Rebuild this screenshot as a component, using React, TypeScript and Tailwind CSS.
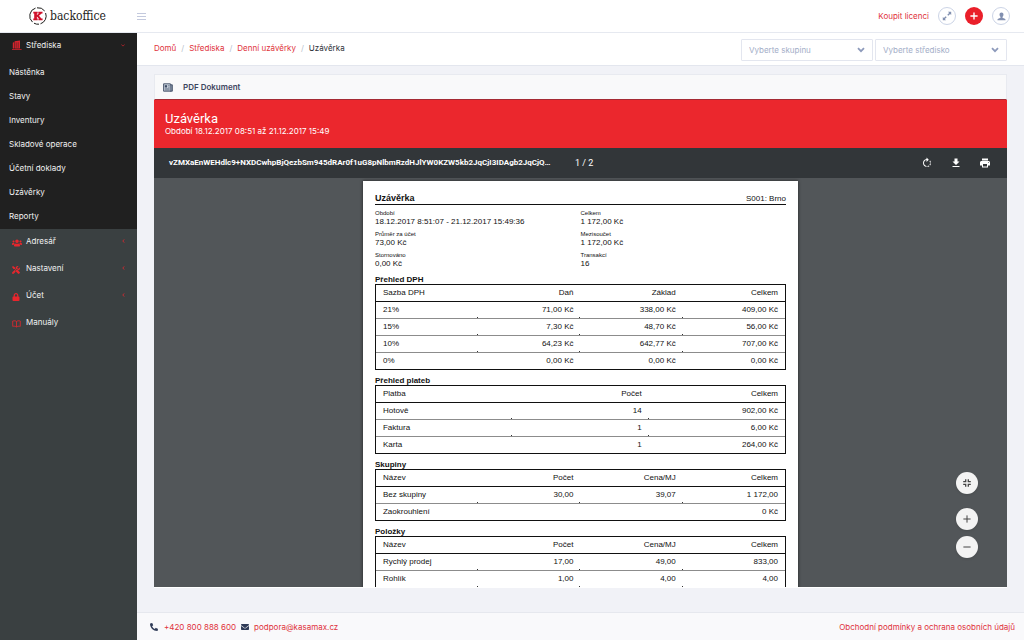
import React from 'react';
import { FaUsers, FaLock, FaTools, FaPhoneAlt, FaEnvelope } from 'react-icons/fa';
import { MdRotateRight, MdFileDownload, MdPrint } from 'react-icons/md';

interface SideItem {
  label: string;
  icon: React.ReactNode;
  arrow: boolean;
}

interface ReportTable {
  title: string;
  head: string[];
  rows: string[][];
}

const subItems = ['Nástěnka', 'Stavy', 'Inventury', 'Skladové operace', 'Účetní doklady', 'Uzávěrky', 'Reporty'];

const tables: ReportTable[] = [
  {
    title: 'Přehled DPH',
    head: ['Sazba DPH', 'Daň', 'Základ', 'Celkem'],
    rows: [
      ['21%', '71,00 Kč', '338,00 Kč', '409,00 Kč'],
      ['15%', '7,30 Kč', '48,70 Kč', '56,00 Kč'],
      ['10%', '64,23 Kč', '642,77 Kč', '707,00 Kč'],
      ['0%', '0,00 Kč', '0,00 Kč', '0,00 Kč'],
    ],
  },
  {
    title: 'Přehled plateb',
    head: ['Platba', 'Počet', 'Celkem'],
    rows: [
      ['Hotově', '14', '902,00 Kč'],
      ['Faktura', '1', '6,00 Kč'],
      ['Karta', '1', '264,00 Kč'],
    ],
  },
  {
    title: 'Skupiny',
    head: ['Název', 'Počet', 'Cena/MJ', 'Celkem'],
    rows: [
      ['Bez skupiny', '30,00', '39,07', '1 172,00'],
      ['Zaokrouhlení', '', '', '0 Kč'],
    ],
  },
  {
    title: 'Položky',
    head: ['Název', 'Počet', 'Cena/MJ', 'Celkem'],
    rows: [
      ['Rychlý prodej', '17,00', '49,00', '833,00'],
      ['Rohlík', '1,00', '4,00', '4,00'],
      ['', '', '', ''],
    ],
  },
];

const summary = [
  ['Období', '18.12.2017 8:51:07 - 21.12.2017 15:49:36'],
  ['Celkem', '1 172,00 Kč'],
  ['Průměr za účet', '73,00 Kč'],
  ['Mezisoučet', '1 172,00 Kč'],
  ['Stornováno', '0,00 Kč'],
  ['Transakcí', '16'],
];

const BuildingIcon = () => (
  <svg viewBox="0 0 10 10" className="h-[10px] w-[10px]" fill="currentColor">
    <path d="M2.6 1.2 8 .6v8H2.6z" />
    <path d="M.8 2.8 2.2 2v6.6H.8zM0 8.9h9.6v.8H0z" />
    <path d="M4.2 2.4v5.4M6.2 2.2v5.6" stroke="#202020" strokeWidth=".5" />
  </svg>
);

const BookIcon = () => (
  <svg viewBox="0 0 10 10" className="h-[9px] w-[9px]" fill="none" stroke="currentColor" strokeWidth=".9">
    <path d="M5 2.8C4 1.9 2.4 1.8.8 2.2v6c1.6-.4 3.2-.2 4.2.7 1-.9 2.6-1.1 4.2-.7v-6C7.6 1.8 6 1.9 5 2.8zM5 2.8v6" />
  </svg>
);

const NewsIcon = () => (
  <svg viewBox="0 0 10 9" className="h-[9px] w-[10px]" fill="none" stroke="#3d4b63">
    <path d="M.6.8h6.8v7.4H.6z" fill="#c9d2de" strokeWidth=".9" />
    <path d="M7.6 1.8h1.7v6.4H7" fill="#7d8a9e" strokeWidth=".9" />
    <path d="M5.2 2.6h1.3M5.2 4.2h1.3M1.8 5.8h4.7M1.8 7h4.7" strokeWidth=".6" />
    <path d="M1.8 2.2h2.3v2.3H1.8z" fill="#3d4b63" stroke="none" />
  </svg>
);

const Logo = () => (
  <svg viewBox="0 0 18 18" className="h-[18px] w-[18px]">
    <g fill="none" stroke="#1d1d1b" strokeWidth="1">
      <path d="M6.5 1.1A8.2 8.2 0 0 0 3.5 15.1" />
      <path d="M8 .8A8.2 8.2 0 0 1 15.7 4" />
      <path d="M16.6 6A8.2 8.2 0 0 1 11.5 16.8" />
      <path d="M10 17.2A8.2 8.2 0 0 1 5 16.2" />
    </g>
    <path
      fill="#d0112b"
      d="M4.3 4.8h4.4v1.7h-.8v1.6l2-1.6h-.6V4.8h4.2v1.7h-.9L10 8.700l2.4 2.900h1.200v1.700H9.400v-1.600h.6L7.900 9.400v2.200h.8v1.700H4.300v-1.700h.9V6.500h-.9z"
    />
  </svg>
);

const Chevron = () => (
  <svg viewBox="0 0 8 6" className="pointer-events-none absolute top-2 right-2 h-[6px] w-[8px]" fill="none" stroke="#8d9abb" strokeWidth="1.8">
    <path d="M1 1.2 4 4.2 7 1.2" />
  </svg>
);

const sideItems: SideItem[] = [
  { label: 'Adresář', icon: <FaUsers size={10} />, arrow: true },
  { label: 'Nastavení', icon: <FaTools size={8} />, arrow: true },
  { label: 'Účet', icon: <FaLock size={8} />, arrow: true },
  { label: 'Manuály', icon: <BookIcon />, arrow: false },
];

const Sidebar = () => (
  <nav className="w-[137px] shrink-0 bg-[#3a4041] text-[#f1f1f1]">
    <div className="bg-[#202020] pb-px">
      <a href="#strediska" className="flex h-6 items-center pr-3 pl-3">
        <span className="flex w-[14px] text-[#d9232e]">
          <BuildingIcon />
        </span>
        <span className="flex-1">Střediska</span>
        <svg viewBox="0 0 4 3" className="h-[3px] w-[4px]" fill="none" stroke="#c2232c" strokeWidth=".8">
          <path d="M.4.6 2 2.1 3.6.6" />
        </svg>
      </a>
      <ul className="pt-[3px]">
        {subItems.map((label) => (
          <li key={label}>
            <a href="#sub" className="flex h-6 items-center pl-[9px]">{label}</a>
          </li>
        ))}
      </ul>
    </div>
    <ul>
      {sideItems.map((item) => (
        <li key={item.label} className="pb-[3px]">
          <a href="#menu" className="flex h-6 items-center pr-3 pl-3">
            <span className="flex w-[14px] pt-[3px] text-[#e8262d]">{item.icon}</span>
            <span className="flex-1">{item.label}</span>
            {item.arrow && (
              <svg viewBox="0 0 3 4" className="h-[4px] w-[3px]" fill="none" stroke="#e8262d" strokeWidth=".8">
                <path d="M2.2.4.8 2l1.4 1.6" />
              </svg>
            )}
          </a>
        </li>
      ))}
    </ul>
  </nav>
);

const Filter = ({ id, label }: { id: string; label: string }) => (
  <div className="relative w-[132px]">
    <select id={id} aria-label={label} className="block h-[22px] w-full appearance-none rounded-[1px] border border-[#e3e6ef] bg-white px-[7px] text-[#a3aec8]">
      <option>{label}</option>
    </select>
    <Chevron />
  </div>
);

const ReportSection = ({ table }: { table: ReportTable }) => (
  <section>
    <h3 className="flex h-[15px] items-end leading-[8px] font-bold">{table.title}</h3>
    <table className="w-full table-fixed border-separate border-spacing-0 border border-[#111]">
      <thead>
        <tr>
          {table.head.map((cell) => (
            <th key={cell} className="h-[17px] border-b border-[#111] px-[7px] text-right leading-[8px] font-normal first:text-left">
              {cell}
            </th>
          ))}
        </tr>
      </thead>
      <tbody className="[&>tr:last-child>td]:h-4 [&>tr:last-child>td]:border-b-0 [&>tr:last-child>td]:after:hidden">
        {table.rows.map((row, r) => (
          <tr key={r}>
            {row.map((cell, c) => (
              <td
                key={c}
                className="relative h-[17px] border-b border-[#8c8c8c] px-[7px] text-right leading-[8px] first:text-left after:absolute after:right-0 after:bottom-0 after:h-px after:w-px after:bg-[#333] last:after:hidden"
              >
                {cell}
              </td>
            ))}
          </tr>
        ))}
      </tbody>
    </table>
  </section>
);

const PdfPage = () => (
  <div className="mx-auto mt-[3px] w-[51%] bg-white px-3 pt-3 pb-6 font-['Liberation_Sans',sans-serif] text-[8px] text-[#111] shadow-[0_0_3px_#222]">
    <div className="flex items-end justify-between border-b border-[#111] leading-[11px]">
      <h2 className="text-[9px] font-bold">Uzávěrka</h2>
      <span>S001: Brno</span>
    </div>
    <dl className="mt-[4px] mb-px grid grid-cols-2 gap-y-[4px]">
      {summary.map(([label, value]) => (
        <div key={label}>
          <dt className="text-[6px] leading-[8px]">{label}</dt>
          <dd className="leading-[9px]">{value}</dd>
        </div>
      ))}
    </dl>
    {tables.map((table) => (
      <ReportSection key={table.title} table={table} />
    ))}
  </div>
);

const zoomButton = 'flex h-[22px] w-[22px] items-center justify-center rounded-full bg-[#f3f3f3] text-[#444] shadow-sm';

const PdfViewer = () => (
  <div className="relative flex min-h-0 flex-1 flex-col border-b border-white bg-[#525659]">
    <div className="flex h-[30px] shrink-0 items-center bg-[#323639] pr-4 pl-[15px] font-[Roboto,sans-serif] text-[9px] text-white">
      <span className="min-w-[402px] text-[8px] font-bold">vZMXaEnWEHdlc9+NXDCwhpBjQezbSm945dRAr0f1uG8pNlbmRzdHJlYW0KZW5kb2JqCjI3IDAgb2JqCjQ…</span>
      <span className="ml-1 flex-1 whitespace-pre">1 / 2</span>
      <div className="flex gap-[17px]">
        <button aria-label="Otočit"><MdRotateRight size={12} /></button>
        <button aria-label="Stáhnout"><MdFileDownload size={12} /></button>
        <button aria-label="Tisk"><MdPrint size={12} /></button>
      </div>
    </div>
    <div className="min-h-0 flex-1 overflow-hidden">
      <PdfPage />
    </div>
    <div className="absolute right-[29px] bottom-[29px] flex flex-col gap-[6px]">
      <button aria-label="Přizpůsobit" className={`${zoomButton} mb-[8px]`}>
        <svg viewBox="0 0 8 8" className="h-[8px] w-[8px]" fill="none" stroke="currentColor" strokeWidth="1.3">
          <path d="M2.7.2v2.5H.2M5.300.2v2.500h2.500M2.700 7.800V5.300H.2M5.300 7.800V5.300h2.500" />
        </svg>
      </button>
      <button aria-label="Přiblížit" className={zoomButton}>
        <svg viewBox="0 0 8 8" className="h-[8px] w-[8px]" stroke="currentColor"><path d="M4 .4v7.2M.4 4h7.2" /></svg>
      </button>
      <button aria-label="Oddálit" className={zoomButton}>
        <svg viewBox="0 0 8 8" className="h-[8px] w-[8px]" stroke="currentColor"><path d="M.4 4h7.2" /></svg>
      </button>
    </div>
  </div>
);

const Topbar = () => (
  <header className="flex h-[33px] shrink-0 items-center border-b border-[#e6e9f0] bg-white pr-[14px] pl-[29px]">
    <a href="#home" className="flex items-center gap-[3px]">
      <Logo />
      <span className="font-['DejaVu_Serif_Condensed','DejaVu_Serif',serif] text-[12px] text-[#1d1d1b]">backoffice</span>
    </a>
    <button aria-label="Menu" className="ml-[31px]">
      <svg viewBox="0 0 9 7" className="h-[7px] w-[9px]" stroke="#c3c9dd" strokeWidth="1">
        <path d="M0 .5h9M0 3.5h9M0 6.5h9" />
      </svg>
    </button>
    <div className="ml-auto flex items-center gap-[9px]">
      <a href="#licence" className="text-[#e0323b]">Koupit licenci</a>
      <button aria-label="Celá obrazovka" className="flex h-[18px] w-[18px] items-center justify-center rounded-full border border-[#ccd4e6] text-[#8290b0]">
        <svg viewBox="0 0 10 10" className="h-[10px] w-[10px]" fill="currentColor">
          <path d="M6 .8h3.2V4L8.100 2.900 6.300 4.700l-1-1 1.800-1.800zM4 9.200H.8V6l1.100 1.100 1.800-1.800 1 1-1.800 1.800z" />
        </svg>
      </button>
      <button aria-label="Přidat" className="flex h-[18px] w-[18px] items-center justify-center rounded-full bg-[#ea1f2a]">
        <svg viewBox="0 0 8 8" className="h-[8px] w-[8px]" stroke="#fff" strokeWidth="1.4"><path d="M4 .4v7.2M.4 4h7.2" /></svg>
      </button>
      <button aria-label="Profil" className="flex h-[18px] w-[18px] items-center justify-center rounded-full border border-[#ccd4e6] text-[#8290b0]">
        <svg viewBox="0 0 10 10" className="h-[9px] w-[9px]" fill="currentColor">
          <path d="M5 .6c1.4 0 2.2 1 2.2 2.3S6.600 5 6.100 5.600v.8l2.600 1c.5.2.8.6.8 1.800h-9c0-1.200.3-1.600.8-1.800l2.600-1v-.8C3.400 5 2.800 4.200 2.800 2.900S3.600.6 5 .6z" />
        </svg>
      </button>
    </div>
  </header>
);

const crumbs = ['Domů', 'Střediska', 'Denní uzávěrky'];

const App: React.FC = () => {
  return (
    <div className="flex h-screen flex-col font-[Inter,sans-serif] text-[8px] leading-[12px]">
      <Topbar />
      <div className="flex min-h-0 flex-1">
        <Sidebar />
        <div className="flex min-w-0 flex-1 flex-col bg-[#f1f2f7]">
          <div className="flex h-[33px] shrink-0 items-center justify-between border-b border-[#e3e6ee] bg-white pr-[17px] pl-[17px]">
            <ol className="flex pb-[3px]">
              {crumbs.map((crumb) => (
                <li key={crumb}>
                  <a href="#crumb" className="text-[#e0323b]">{crumb}</a>
                  <span className="px-[5px] text-[#b8bfcc]">/</span>
                </li>
              ))}
              <li className="text-[#2b2f36]">Uzávěrka</li>
            </ol>
            <div className="flex gap-[2px] pt-[2px]">
              <Filter id="group" label="Vyberte skupinu" />
              <Filter id="center" label="Vyberte středisko" />
            </div>
          </div>

          <main className="flex min-h-0 flex-1 flex-col px-[17px] pt-2 pb-6">
            <div className="flex h-[26px] shrink-0 items-center gap-[10px] border border-b-[#a52a33] border-[#e8eaf0] bg-[#f9f9fa] px-2">
              <NewsIcon />
              <h1 className="font-semibold text-[#3d4560]">PDF Dokument</h1>
            </div>
            <div className="flex h-12 shrink-0 flex-col justify-center bg-[#eb272d] px-[11px] text-white">
              <h2 className="font-[Roboto,sans-serif] text-[13px] leading-[14px]">Uzávěrka</h2>
              <p className="leading-[10px]">Období 18.12.2017 08:51 až 21.12.2017 15:49</p>
            </div>
            <PdfViewer />
          </main>

          <footer className="flex h-7 shrink-0 items-center border-t border-[#e6e8ee] bg-[#f9f9fb] pr-[9px] pl-[13px] text-[#e0323b]">
            <FaPhoneAlt size={8} color="#2f3b57" />
            <a href="tel:+420800888600" className="ml-[6px]">+420 800 888 600</a>
            <FaEnvelope size={8} color="#2f3b57" className="ml-[5px]" />
            <a href="mailto:podpora@kasamax.cz" className="ml-[5px]">podpora@kasamax.cz</a>
            <a href="#terms" className="ml-auto">Obchodní podmínky a ochrana osobních údajů</a>
          </footer>
        </div>
      </div>
    </div>
  );
};

export default App;
